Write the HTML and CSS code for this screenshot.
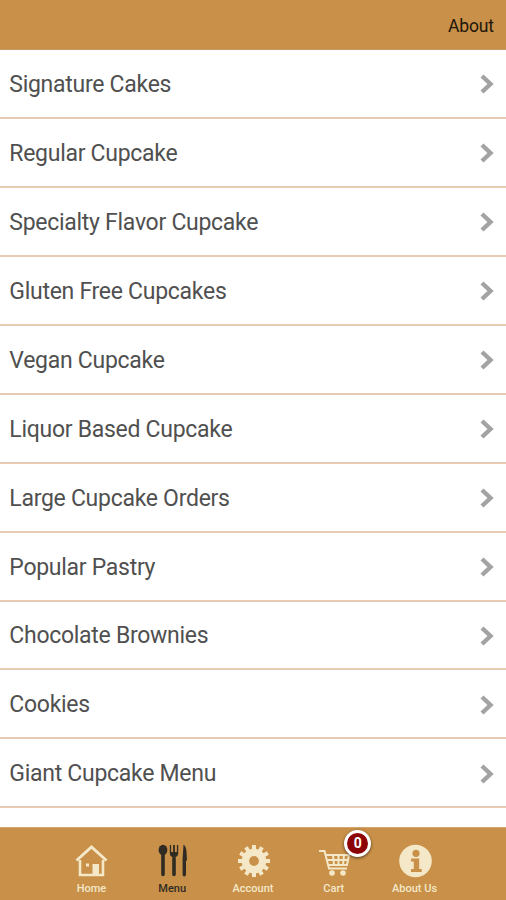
FILE: index.html
```html
<!DOCTYPE html>
<html lang="en">
<head>
    <meta charset="UTF-8">
    <meta name="viewport" content="width=device-width, initial-scale=1.0">
    <title>Menu</title>
    <link rel="stylesheet" href="styles.css">
</head>
<body>
    <svg class="defs">
        <symbol id="arrow" viewBox="0 0 14 20">
            <path d="M2 2 L10.5 10 L2 18" fill="none" stroke="#a3a3a3" stroke-width="4.4"/>
        </symbol>
    </svg>

    <div class="app">
        <header class="header">
            <a class="about">About</a>
        </header>

        <ul class="menu-list">
            <li><span>Signature Cakes</span><svg class="arrow"><use href="#arrow"/></svg></li>
            <li><span>Regular Cupcake</span><svg class="arrow"><use href="#arrow"/></svg></li>
            <li><span>Specialty Flavor Cupcake</span><svg class="arrow"><use href="#arrow"/></svg></li>
            <li><span>Gluten Free Cupcakes</span><svg class="arrow"><use href="#arrow"/></svg></li>
            <li><span>Vegan Cupcake</span><svg class="arrow"><use href="#arrow"/></svg></li>
            <li><span>Liquor Based Cupcake</span><svg class="arrow"><use href="#arrow"/></svg></li>
            <li><span>Large Cupcake Orders</span><svg class="arrow"><use href="#arrow"/></svg></li>
            <li><span>Popular Pastry</span><svg class="arrow"><use href="#arrow"/></svg></li>
            <li><span>Chocolate Brownies</span><svg class="arrow"><use href="#arrow"/></svg></li>
            <li><span>Cookies</span><svg class="arrow"><use href="#arrow"/></svg></li>
            <li><span>Giant Cupcake Menu</span><svg class="arrow"><use href="#arrow"/></svg></li>
        </ul>

        <nav class="tabs">
            <a class="tab">
                <svg class="icon" viewBox="0 0 36 36">
                    <path d="M7 17 V32 H30 V17" fill="none" stroke="currentColor" stroke-width="2.600"/>
                    <path d="M3.500 17.500 L18.500 4 L33.500 17.500" fill="none" stroke="currentColor" stroke-width="3"/>
                    <path d="M19.500 21 h6.500 v11 h-6.500z M13 20.500 h3 v3 h-3z" fill="currentColor"/>
                </svg>
                <span>Home</span>
            </a>
            <a class="tab active">
                <svg class="icon" viewBox="0 0 36 36">
                    <ellipse cx="9" cy="7" rx="4.400" ry="5.300" fill="currentColor"/>
                    <path d="M9 11 V31.500 M20 15 V31.500" stroke="currentColor" stroke-width="3.600" stroke-linecap="round"/>
                    <path d="M15.800 2 h1.300 v7 h2 v-7 h1.800 v7 h2 v-7 h1.300 v8 q0 3.500 -2.800 4 h-2.800 q-2.800 -.5 -2.800 -4z" fill="currentColor"/>
                    <path d="M29.500 1.500 q2.500 1.500 3 7 l.5 9 h-1 v14 q0 2 -1.700 2 t-1.700 -2 v-15 z" fill="currentColor"/>
                </svg>
                <span>Menu</span>
            </a>
            <a class="tab">
                <svg class="icon" viewBox="0 0 36 36">
                    <circle cx="19" cy="18" r="8.600" fill="none" stroke="currentColor" stroke-width="7.400"/>
                    <g stroke="currentColor" stroke-width="4">
                        <path d="M19 2 V7 M19 29 V34"/>
                        <path d="M19 2 V7 M19 29 V34" transform="rotate(30 19 18)"/>
                        <path d="M19 2 V7 M19 29 V34" transform="rotate(60 19 18)"/>
                        <path d="M19 2 V7 M19 29 V34" transform="rotate(90 19 18)"/>
                        <path d="M19 2 V7 M19 29 V34" transform="rotate(120 19 18)"/>
                        <path d="M19 2 V7 M19 29 V34" transform="rotate(150 19 18)"/>
                    </g>
                </svg>
                <span>Account</span>
            </a>
            <a class="tab">
                <svg class="icon" viewBox="0 0 36 36">
                    <path d="M3 8 H8.500 L13 25.500 H31 M9.500 12 H33 L31 22 H12.500 M11 17 H32 M17 12 L18 22 M22.500 12 V22 M28 12 L27 22" fill="none" stroke="currentColor" stroke-width="2"/>
                    <circle cx="16" cy="30" r="2.800" fill="currentColor"/>
                    <circle cx="27" cy="30" r="2.800" fill="currentColor"/>
                </svg>
                <span>Cart</span>
                <b class="badge">0</b>
            </a>
            <a class="tab">
                <svg class="icon" viewBox="0 0 36 36">
                    <circle cx="18.500" cy="18" r="16.300" fill="currentColor"/>
                    <circle cx="19" cy="10.300" r="3.600" fill="#c89048"/>
                    <path d="M14 15.500 h8.200 v10.500 h2.500 v3 h-10.700 v-3 h2.800 v-7.500 h-2.800z" fill="#c89048"/>
                </svg>
                <span>About Us</span>
            </a>
        </nav>
    </div>
</body>
</html>
```
FILE: styles.css
```css
* {
    box-sizing: border-box;
}
body {
    margin: 0;
    font-family: Roboto, Arial, sans-serif;
    background-color: #fff;
}
.defs {
    display: none;
}
.app {
    display: flex;
    flex-direction: column;
    height: 900px;
    overflow: hidden;
}
.header {
    display: flex;
    flex: none;
    align-items: center;
    justify-content: flex-end;
    height: 50px;
    padding: 2px 12px 0 0;
    background-color: #c89048;
    border-bottom: 1px solid #c99b60;
}
.about {
    font-size: 17.5px;
    letter-spacing: -0.1px;
    color: #20160b;
}
.menu-list {
    flex: 1;
    margin: 0;
    padding: 0;
    list-style: none;
}
.menu-list li {
    display: flex;
    align-items: center;
    justify-content: space-between;
    height: 68.95px;
    padding: 2px 12px 0 9.3px;
    border-bottom: 2px solid #e6ccb2;
    font-size: 23px;
    letter-spacing: -0.28px;
    color: #505050;
}
.arrow {
    width: 14px;
    height: 20px;
}
.tabs {
    display: flex;
    flex: none;
    justify-content: center;
    height: 73px;
    padding-top: 15px;
    background-color: #c89048;
    border-top: 1px solid #d3a56c;
}
.tab {
    position: relative;
    display: flex;
    flex-direction: column;
    align-items: center;
    width: 80.8px;
    font-size: 11px;
    font-weight: 500;
    line-height: 14px;
    color: #f4e8c8;
}
.tab.active {
    color: #302c24;
}
.icon {
    width: 36px;
    height: 36px;
    margin-bottom: 3px;
}
.badge {
    position: absolute;
    top: -13px;
    left: 51px;
    width: 27px;
    height: 27px;
    border: 3px solid #fff;
    border-radius: 50%;
    background-color: #8c0308;
    box-shadow: 0 1px 3px rgba(0, 0, 0, 0.6);
    font-size: 14px;
    line-height: 21px;
    text-align: center;
    color: #fff;
}
```
